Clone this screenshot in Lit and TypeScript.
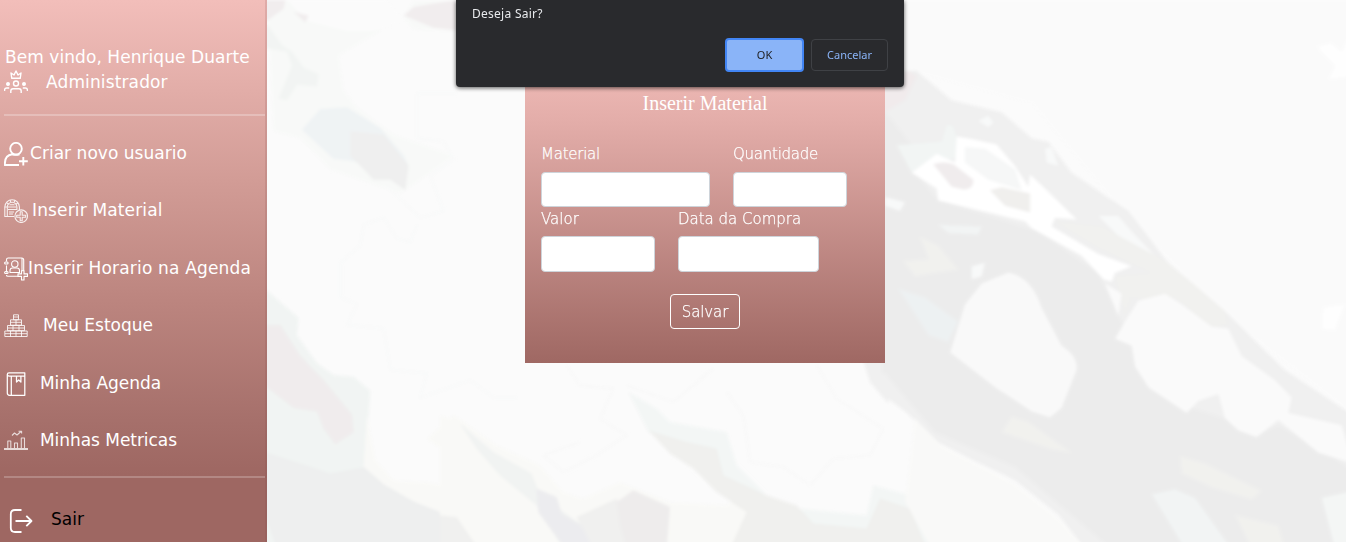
import { LitElement, html, svg, css } from "lit";
import { customElement, property } from "lit/decorators.js";

const icons: Record<string, unknown> = {
  team: svg`<g stroke-width="1.4"><path d="M7.800 8.300L7 3l3 2 2-4 2 4 3-2-.8 5.300z"/><circle cx="12" cy="13.500" r="2.500"/><path d="M6.800 23v-2q0-2.200 2.200-2.200h6q2.200 0 2.200 2.200v2M.6 21v-1q0-2 2-2h2.600M23.400 21v-1q0-2-2-2h-2.600"/><circle cx="4" cy="14" r="1.300" fill="#fff"/><circle cx="20" cy="14" r="1.300" fill="#fff"/></g>`,
  userPlus: svg`<g stroke-width="1.900"><circle cx="12" cy="6.700" r="5.800"/><path d="M15 23H.9v-1.500C.9 16 4 13 8 12.300q4 1.200 7.500 0M19.300 15v8.500M15 19.300h8.800"/></g>`,
  material: svg`<g stroke-width="1.100" opacity=".85"><path d="M10 17.500H.8V8a7.300 7.300 0 0 1 14.600 0v3M3.300 17V8a4.800 4.800 0 0 1 9.600 0v3"/><path d="M.8 8h2.500M2.500 3.500l2 1.700M6 1l.8 2.300M11 1l-.8 2.300M14 3.700l-2 1.500M5.500 5.800h5M4 8h8.500M4 10.500h9M5 13h5M5 15h4"/><circle cx="17.200" cy="17.200" r="6.300"/><path d="M16.200 12.700h2v3.500h3.500v2h-3.500v3.500h-2v-3.500h-3.500v-2h3.500z"/></g>`,
  contact: svg`<g stroke-width="1.100"><path d="M2.500 4.500V2.700Q2.500 1 4.200 1h13.500q2 0 2 2v11M2.500 8.500v7M2.500 18v.3q0 1 1.500 1h10M18 1.500V14"/><rect x=".6" y="5" width="3.500" height="2" rx="1"/><rect x=".6" y="14.500" width="3.500" height="2" rx="1"/><circle cx="10.800" cy="7" r="3.200"/><path d="M6 15.500v-2q0-2.500 2.500-2.500h4.500q2.500 0 2.500 2.500v2zM17.500 13.700h2.500v3.200h3.500v2.500H20V23h-2.500v-3.600H14v-2.500h3.500z"/></g>`,
  stack: svg`<g stroke-width="1" opacity=".82"><path d="M9.500.8h5v5h-5zM6.500 5.800h11v5.400h-11zM3.500 11.500h17v5.200h-17zM.8 17h22.400v5.500H.8zM12 6v5M9 11.500v5.500M15 11.500v5.500M6.500 17v5.500M12 17v5.500M17.500 17v5.500M9.500 3h5M6.500 8.300h11M3.500 14h17M1 19.700h22"/></g>`,
  book: svg`<g stroke-width="1.250"><path d="M20.800 4v19.300H5.500q-2.200 0-2.200-2.200V2.500Q3.300.8 5 .8h15.800V4H5.500Q3.300 4 3.300 2.500M7.300 4v19.300M12.500 4v6l2.200-2 2.200 2V4"/></g>`,
  chart: svg`<g stroke-width="1.100" opacity=".75"><path d="M3.800 19v-7h3v7M10.500 19v-5h3v5M17.300 19V9h3.200v10"/><path d="M0 20h24" stroke-width="2"/><path d="M8 6.500l2.500-2.500L13 6l4-3.500M14.500 2.300H17.600v2.200"/></g>`,
  exit: svg`<g stroke-width="1.800"><path d="M12.500 1H6Q1.800 1 1.800 5v14q0 4 4.200 4h6.500M6.500 12h16M17.300 6.800l5.200 5.200-5.200 5.200"/></g>`,
};

const icon = (name: string) => html`<svg class="icon" viewBox="0 0 24 24" width="24" height="24" fill="none" stroke="#fff" stroke-linejoin="round">${icons[name]}</svg>`;

@customElement("marble-backdrop")
class MarbleBackdrop extends LitElement {
  static styles = css`
    :host { display: block; }
    .art { display: block; width: 1346px; height: 542px; }
  `;
  render() {
    return html`<svg class="art" viewBox="0 0 1346 542">
      <defs><filter id="soft" x="-5%" y="-5%" width="110%" height="110%"><feGaussianBlur stdDeviation="1.5" /></filter></defs>
      <rect width="1346" height="542" fill="#fbfbfb" />
      <g filter="url(#soft)">
        <g transform="translate(267 0) scale(.3333 .3457)">
          <path fill="#f8f9f8" d="M0 0H350L340 90 215 160 230 260 270 310 380 390 560 450 520 480 400 560 190 490 100 400 20 380z" />
          <path fill="#fbfbfb" d="M60 0H360L410 60 320 90 240 90 120 60z" />
          <path fill="#f8f9f8" d="M360 0H440L410 50 440 85 570 90V0z" />
          <path fill="#f1edee" d="M410 45L440 20 500 10 570 0V88L500 80z" />
          <path fill="#f1edee" d="M-20 0H55L50 25 0 60H-20zM80 35L125 45 115 65z" />
          <path fill="#f2f4f3" d="M-20 70H0L45 130 75 150 110 195 155 215 150 250 90 245 60 290 35 285 75 190 60 150 0 140H-20z" />
          <path fill="#eff3f4" d="M160 315L240 310 340 370 410 450 425 480 400 500 250 465 200 460 105 375z" />
          <path fill="#efefef" d="M250 380L350 390 425 480 415 550 370 520 320 520 250 450z" />
          <path fill="#f1f4f3" d="M-20 820L0 840 95 920 90 970 150 1050 200 1085 260 1090 310 1130 295 1350 350 1400 440 1450 560 1500 620 1588H-20z" />
          <path fill="#f0eced" d="M-20 940H40L100 1030 170 1100 255 1200 260 1250 205 1285 170 1240 150 1190 80 1180 0 1120H-20z" />
          <path fill="#eeefef" d="M-20 1310H0L130 1350 190 1370 300 1350 350 1400 440 1450 560 1495 620 1588H30L-20 1450z" />
          <path fill="#f9f9f7" d="M300 1200L325 1330 380 1390 480 1395 620 1420 600 1350 480 1270 560 1200 780 1350V1588H620L570 1500 440 1450 350 1400 290 1350z" />
          <path fill="none" stroke="#f8f9f9" stroke-width="5" d="M570 270H450V400L530 410 560 460 490 510 530 610 460 630 350 530M450 650L430 700 390 690 350 630 290 650 280 710 220 760V860L270 880 240 940 350 950 370 1070 480 1080 460 1150 610 1100 680 1150 750 1150" />
        </g>
        <g transform="translate(440 342) scale(.33333)">
          <path fill="#f9f9f7" d="M0 220L60 240 170 310 300 370 370 450 430 470 540 420 690 480 860 490 920 440 1000 620H0z" />
          <path fill="#f1f3f2" d="M60 245L160 330 275 395 300 460 440 560 460 620H370L290 490 180 400 110 320z" />
          <path fill="#ececef" d="M290 440L350 465 365 515 465 575 475 620H375L295 510z" />
          <path fill="#f0f0ef" d="M0 520L50 525 115 620H0zM410 525L530 470 580 620H460z" />
          <path fill="#eeecec" d="M530 480L580 445 690 495 680 620H560L540 550z" />
          <path fill="#f3f6f5" d="M565 150L650 200 690 240 860 270 890 370 980 460 1080 500 1280 520 1300 430 1410 460 1500 620H1200L840 440 720 320 625 270z" />
          <path fill="#f0f0ee" d="M625 265L740 300 830 320 850 400 980 460 1070 490 1120 545 1280 560 1320 470 1410 500 1460 620H870L920 510 830 450 760 380 690 335z" />
          <path fill="none" stroke="#f8f8f8" stroke-width="5" d="M380 70L420 130 520 140 480 230 560 280 470 340 370 390 310 340 420 300M560 130L700 180 820 80 780 110M860 150L910 220 930 360 1030 375 1110 430 1180 350 1290 340 1330 260 1190 170 1130 70" />
          <path fill="#f0f0f0" d="M1265 40H1345V185L1290 120z" />
        </g>
        <g transform="translate(885 0) scale(.3333 .3457)">
          <path fill="#fafafa" d="M59 0H1403V1200L1000 900 700 600 440 300 59 200z" />
          <path fill="#f0f0f0" d="M-10 205L95 205 200 290 350 325 440 400 490 410 560 500 730 610 850 760 1020 900 1200 1070 1403 1200V1588H600L520 1490 390 1390 260 1330 160 1280 60 1190 -10 1140z" />
          <path fill="#ececec" d="M-10 310L80 420 90 500 160 580 330 630 460 670 640 790 700 910 740 1000 800 1130 920 1180 1050 1220 1110 1260 1180 1230 1320 1310 1403 1360V1588H680L390 1350 150 1250 0 1080H-10z" />
          <path fill="#f1ebec" d="M-10 240L70 205 95 220 60 290 -10 330z" />
          <path fill="#f2f5f4" d="M35 420L170 410 185 360 205 365 230 450 80 500z" />
          <path fill="#f8f9f9" d="M280 350L310 335 325 355 310 368zM480 430L500 425 520 480 485 470zM0 570L60 585 45 610 0 595zM260 770L300 760 290 800 260 808zM640 625L700 625 740 670 820 750 760 740z" />
          <path fill="#fff" d="M80 500L155 445 210 470 215 395 260 402 335 418 390 480 430 540 435 505 480 545 575 635 510 630 500 655 640 735 740 770 690 790 680 815 655 808 590 740 440 660 420 640 270 605 160 580 155 545z" />
          <path fill="#f6f7f7" d="M240 425L300 430 390 490 410 550 310 520 240 470z" />
          <path fill="#f0eced" d="M145 475Q175 465 205 475L265 520Q265 550 235 548L200 540z" />
          <path fill="#f0efed" d="M315 550L350 542 435 560 435 615 360 595z" />
          <path fill="#f1f1ef" d="M510 640L650 655 850 760 1020 900 1030 940 980 945 870 860 830 870 740 860 720 910 690 800 800 790 640 715z" />
          <path fill="#f9f9f9" d="M370 788Q440 800 470 890L530 1000Q580 1030 575 1070L530 1180 495 1208 440 1190 330 1120 195 1020 240 880 290 820z" />
          <path fill="#fafafa" d="M660 820L710 850 700 915zM720 930L760 870 840 850 890 880 980 945 1030 950 1070 1030 1170 1100 1220 1150 1210 1195 1370 1230 1403 1340 1300 1310 1180 1215 1115 1265 1060 1245 1020 1210 1000 1140 940 1160 905 1195 790 1120 750 1060 740 1000 690 980z" />
          <path fill="#f2f4f4" d="M160 650L290 655 280 678 190 675zM800 1430L870 1415 930 1440 1040 1588H900z" />
          <path fill="#edf1f2" d="M40 835L120 860 220 930 190 990 130 970z" />
          <path fill="#f1f1ee" d="M105 685L160 710 220 780 150 790 90 800 55 755 130 750zM380 1205L430 1220 560 1310 500 1300 350 1250zM885 1320L960 1340 1130 1420 1100 1445 980 1410 890 1370zM1050 1490L1180 1520 1200 1588H1100z" />
          <path fill="#f9f9f8" d="M90 1210L170 1290 390 1400 520 1500 600 1588H140L60 1450z" />
          <path fill="#fefefe" d="M1295 135L1340 125 1370 150 1403 80V220L1330 230 1350 190zM1315 890L1380 880 1350 955 1310 950z" />
          <path fill="#f4f6f5" d="M1310 1440L1403 1420V1588H1350z" />
        </g>
      </g>
    </svg>`;
  }
}

@customElement("side-menu")
class SideMenu extends LitElement {
  static styles = css`
    :host { display: block; box-sizing: border-box; width: 267px; height: 542px; padding: 45px 0 0 4px;
      border-right: 2px solid rgba(130, 75, 72, .16);
      background: linear-gradient(#f2beba 0, #d29c96 180px, #bc857f 300px, #a6706b 420px, #9e6762 475px) border-box;
      font: 17px/25px Verdana, "DejaVu Sans", sans-serif; color: #fff; white-space: nowrap; }
    .welcome { padding-left: 1px; letter-spacing: .06px; }
    .role { display: flex; height: 44px; gap: 18px; }
    .role .label { letter-spacing: .13px; }
    .rule { height: 2px; background: rgba(255, 255, 255, .25); }
    .rule.low { background: rgba(255, 255, 255, .22); }
    .icon { display: block; flex: none; }
    .list { display: flex; flex-direction: column; height: 345px; padding-top: 9px; padding-bottom: 6px; }
    .item { display: flex; flex: 1; align-items: center; }
    .item .label { margin-top: -1px; }
    .exit { display: flex; align-items: center; gap: 18px; padding: 31px 0 0 5px; color: #000; }
    .exit .label { margin-top: -3px; }
  `;
  @property({ attribute: false }) items = [
    { icon: "userPlus", label: "Criar novo usuario", gap: 2, spacing: 0.03 },
    { icon: "material", label: "Inserir Material", gap: 4, spacing: 0.15 },
    { icon: "contact", label: "Inserir Horario na Agenda", gap: 0, spacing: 0.17 },
    { icon: "stack", label: "Meu Estoque", gap: 15, spacing: 0 },
    { icon: "book", label: "Minha Agenda", gap: 12, spacing: -0.05 },
    { icon: "chart", label: "Minhas Metricas", gap: 12, spacing: -0.05 },
  ];
  render() {
    return html`
      <div class="welcome">Bem vindo, Henrique Duarte</div>
      <div class="role">${icon("team")}<span class="label">Administrador</span></div>
      <div class="rule"></div>
      <div class="list">${this.items.map((i) => html`<div class="item">${icon(i.icon)}<span class="label" style="margin-left:${i.gap}px;letter-spacing:${i.spacing}px">${i.label}</span></div>`)}</div>
      <div class="rule low"></div>
      <div class="exit">${icon("exit")}<span class="label">Sair</span></div>
    `;
  }
}

@customElement("material-form")
class MaterialForm extends LitElement {
  static styles = css`
    :host { display: block; box-sizing: border-box; width: 360px; height: 286px; padding: 14px 16px 0;
      background: linear-gradient(#edb8b4 0, #e3ada9 45px, #9f6863 100%);
      color: #fff; font: 200 15px/24px "DejaVu Sans", Verdana, sans-serif; -webkit-text-stroke: .25px #fff; }
    .title { margin: 0; font: 400 20px/24px "Liberation Serif", "Times New Roman", serif; text-align: center; -webkit-text-stroke: 0; }
    .row { display: flex; gap: 23px; }
    .row.first { margin-top: 27px; }
    .row.second { height: 65px; }
    .field { display: flex; flex-direction: column; gap: 6px; white-space: nowrap; letter-spacing: -.25px; }
    .second .field { gap: 5px; letter-spacing: 0; }
    .input { box-sizing: border-box; display: block; height: 36px; padding: 0; border: 1px solid #ced4da; border-radius: 4px; background: #fff; }
    .first .input { height: 35px; }
    .w169 { width: 169px; } .w114 { width: 114px; } .w141 { width: 141px; }
    .actions { display: flex; justify-content: center; margin-top: 22px; }
    .save { box-sizing: border-box; width: 70px; height: 35px; padding: 0; border: 1px solid #fff; border-radius: 4px; background: none; color: #fff; font: inherit; letter-spacing: -.1px; -webkit-text-stroke: .25px #fff; }
  `;
  field(label: string, size: string) {
    return html`<label class="field"><span>${label}</span><input class="input ${size}" /></label>`;
  }
  render() {
    return html`
      <h1 class="title">Inserir Material</h1>
      <div class="row first">${this.field("Material", "w169")}${this.field("Quantidade", "w114")}</div>
      <div class="row second">${this.field("Valor", "w114")}${this.field("Data da Compra", "w141")}</div>
      <div class="actions"><button class="save">Salvar</button></div>
    `;
  }
}

@customElement("confirm-dialog")
class ConfirmDialog extends LitElement {
  static styles = css`
    :host { display: block; box-sizing: border-box; width: 448px; height: 87px; padding: 5px 16px 0;
      background: #292a2d; border-radius: 0 0 4px 4px; box-shadow: 0 1px 4px rgba(0, 0, 0, .65);
      color: #e8eaed; font: 12px/18px "Noto Sans", sans-serif; }
    .message { letter-spacing: .27px; }
    .buttons { display: flex; justify-content: flex-end; align-items: center; gap: 7px; margin-top: 15px; }
    .button { box-sizing: border-box; width: 77px; height: 32px; padding: 0; border: 1px solid #3f4145; border-radius: 4px; background: none; color: #8ab4f8; font: 11px/16px "Noto Sans", sans-serif; }
    .ok { width: 79px; height: 34px; border: 2px solid #4285f4; background: #8ab4f8; color: #202124; }
  `;
  render() {
    return html`
      <div class="message">Deseja Sair?</div>
      <div class="buttons"><button class="button ok">OK</button><button class="button">Cancelar</button></div>
    `;
  }
}

@customElement("app-root")
class AppRoot extends LitElement {
  static styles = css`
    :host { display: block; position: relative; width: 1346px; height: 542px; overflow: hidden; }
    .page { display: grid; grid-template-columns: 267px 1fr; grid-template-rows: 542px; }
    .backdrop { grid-area: 1 / 1 / 2 / 3; }
    .menu { grid-area: 1 / 1; z-index: 1; }
    .content { grid-area: 1 / 2; z-index: 1; padding: 77px 0 0 258px; }
    .dialog { position: absolute; z-index: 2; top: 0; left: 456px; }
  `;
  render() {
    return html`
      <div class="page">
        <marble-backdrop class="backdrop"></marble-backdrop>
        <side-menu class="menu"></side-menu>
        <main class="content"><material-form></material-form></main>
      </div>
      <confirm-dialog class="dialog"></confirm-dialog>
    `;
  }
}
